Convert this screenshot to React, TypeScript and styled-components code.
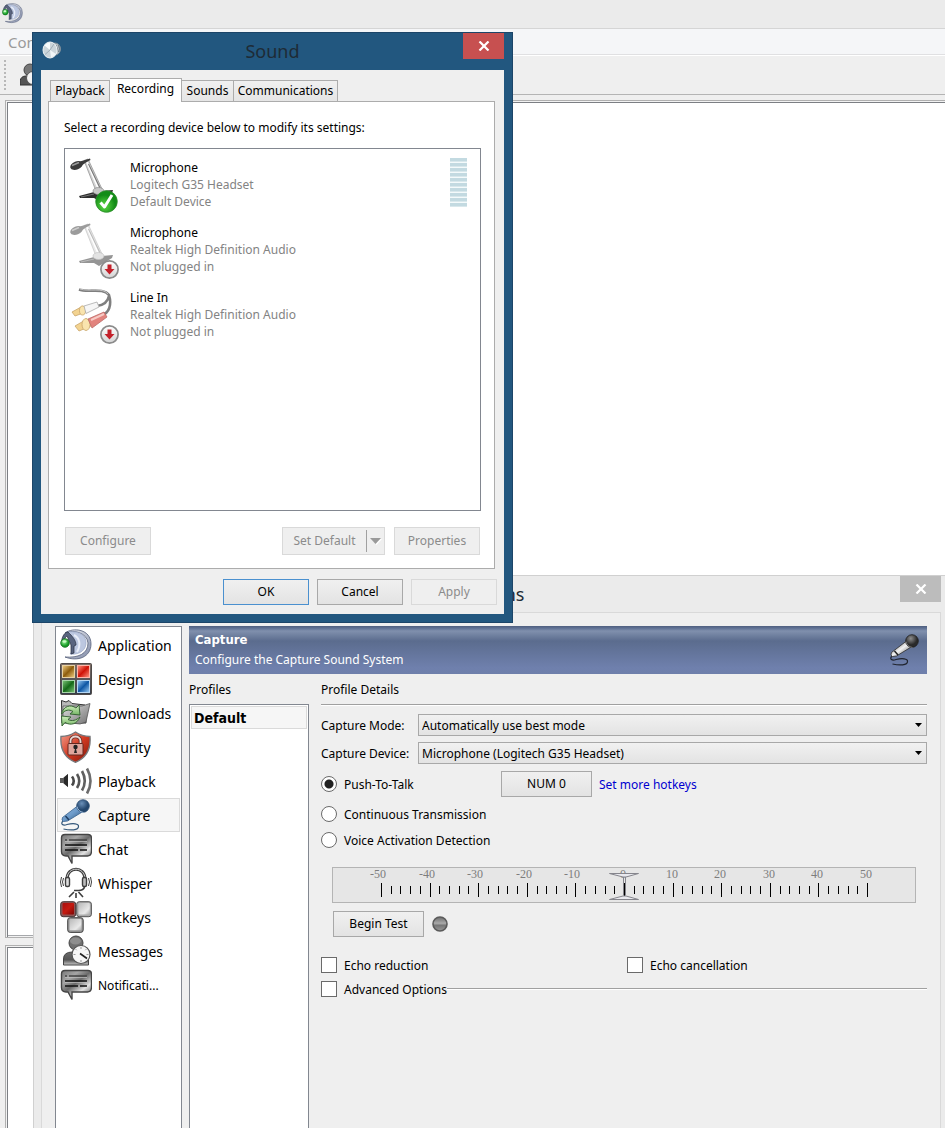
import React, { useState } from "react";
import styled, { createGlobalStyle, css } from "styled-components";

const uiFont = `"Noto Sans", "Open Sans", sans-serif`;
const boldFont = `"DejaVu Sans Condensed", "DejaVu Sans", sans-serif`;

const GlobalStyle = createGlobalStyle`
  *, *::before, *::after { box-sizing: border-box; }
  body { margin: 0; background: #efefef; font-family: ${uiFont}; font-size: 12px; color: #000; }
  button, select, input { font: inherit; color: inherit; margin: 0; }
`;

const Desktop = styled.div`
  position: relative;
  height: 100vh;
  overflow: hidden;
  display: flex;
`;

/* ---------- main client window ---------- */

const MainWindow = styled.main`
  flex: 1;
  display: flex;
  flex-direction: column;
  background: #efefef;
`;

const MainTitleBar = styled.div`
  height: 29px;
  padding: 3px 2px;
  background: #ebebeb;
  border-bottom: 1px solid #d5d5d5;
`;

const MenuBar = styled.nav`
  height: 26px;
  padding: 0 8px;
  display: flex;
  align-items: center;
  background: #f5f6f8;
  border-bottom: 1px solid #e0e0e2;
`;

const MenuItem = styled.button`
  border: 0;
  padding: 0;
  background: none;
  font-size: 15px;
  line-height: 20px;
  color: #9a9a9a;
`;

const ToolBar = styled.div`
  height: 40px;
  display: flex;
  align-items: center;
  gap: 14px;
  padding-left: 4px;
  border-top: 1px solid #fff;
  border-bottom: 1px solid #b4b4b4;
`;

const Grip = styled.div`
  width: 2px;
  height: 31px;
  background: repeating-linear-gradient(#b8b8b8 0 2px, transparent 2px 4px);
`;

const Panes = styled.div`
  flex: 1;
  display: flex;
  flex-direction: column;
  gap: 7px;
  padding: 5px 0 0 5px;
`;

const Pane = styled.div<{ $grow?: boolean }>`
  ${(p) => (p.$grow ? "flex: 1;" : "height: 183px;")}
  background: #fff;
  border: 1px solid #b0b0b0;
  border-right: 0;
  box-shadow: inset 1px 1px 0 #f2f2f2, inset 2px 2px 0 #7c7f84
    ${(p) => p.$grow && ", inset 0 -1px 0 #f2f2f2, inset 0 -2px 0 #a6a8ab"};
  ${(p) => !p.$grow && "border-bottom: 0;"}
`;

/* ---------- shared controls ---------- */

const CloseButton = styled.button<{ $active?: boolean }>`
  width: 41px;
  height: 26px;
  padding: 0;
  border: 0;
  display: grid;
  place-items: center;
  background: ${(p) => (p.$active ? "#c75050" : "#bcbcbc")};
`;

const PushButton = styled.button<{ $primary?: boolean; $tall?: boolean; $wide?: boolean }>`
  width: ${(p) => (p.$wide ? 91 : 86)}px;
  height: ${(p) => (p.$tall ? 28 : 26)}px;
  padding: 0;
  line-height: 16px;
  border: 1px solid ${(p) => (p.$primary ? "#4a90cf" : "#a8a8a8")};
  background: linear-gradient(#f0f0f0, #e3e3e3);
  &:disabled {
    border-color: #d9d9d9;
    background: #efefef;
    color: #8b8b8b;
  }
`;

/* ---------- Sound dialog ---------- */

const SoundDialog = styled.section`
  position: absolute;
  left: 32px;
  top: 32px;
  width: 481px;
  padding: 0 8px 8px;
  border: 1px solid #1c4568;
  background: #22577f;
  z-index: 2;
`;

const SoundTitleBar = styled.header`
  display: grid;
  grid-template-columns: 41px 1fr 41px;
  height: 37px;
`;

const SoundIconBox = styled.div`
  padding: 7px 1px;
`;

const DialogTitle = styled.h1`
  margin: 0;
  text-align: center;
  font-size: 18px;
  font-weight: 400;
  line-height: 37px;
  color: #1e2b36;
`;

const SoundBody = styled.div`
  background: #efefef;
  padding: 8px 7px 9px;
`;

const TabList = styled.div`
  display: flex;
  align-items: flex-end;
  padding-left: 2px;
`;

const Tab = styled.button<{ $selected?: boolean; $width: number }>`
  width: ${(p) => p.$width}px;
  height: 21px;
  padding: 0;
  border: 1px solid #acacac;
  border-bottom: 0;
  border-left-width: 0;
  background: linear-gradient(#f0f0f0, #e5e5e5);
  line-height: 16px;
  &:first-child { border-left-width: 1px; }
  ${(p) =>
    p.$selected &&
    css`
      height: 24px;
      margin-bottom: -1px;
      padding-bottom: 3px;
      position: relative;
      background: #fff;
    `}
`;

const TabPanel = styled.div`
  border: 1px solid #acacac;
  background: #fff;
  padding: 17px 13px 13px 15px;
  margin-right: 2px;
`;

const Prompt = styled.p`
  margin: 0 0 12px;
  line-height: 17px;
`;

const DeviceList = styled.ul`
  list-style: none;
  margin: 0;
  padding: 9px 13px 0 5px;
  height: 363px;
  border: 1px solid #828790;
`;

const Device = styled.li`
  display: grid;
  grid-template-columns: 60px 1fr 17px;
  height: 65px;
`;

const DeviceText = styled.div`
  padding-top: 1px;
  line-height: 17px;
  color: #838383;
`;

const DeviceName = styled.div`
  color: #000;
`;

const LevelMeter = styled.div`
  height: 49px;
  background: repeating-linear-gradient(#c3dae1 0 3px, #d9e8ec 3px 4px, #f4fafb 4px 5px);
`;

const PanelActions = styled.div`
  display: flex;
  gap: 9px;
  padding: 16px 1px 0;
`;

const Spacer = styled.div`
  flex: 1;
`;

const SplitButton = styled.div`
  display: flex;
  align-items: center;
  width: 103px;
  height: 28px;
  border: 1px solid #d9d9d9;
  background: #efefef;
`;

const SplitMain = styled.button`
  flex: 1;
  padding: 0;
  border: 0;
  background: none;
  line-height: 16px;
  &:disabled { color: #8b8b8b; }
`;

const SplitArrow = styled.button`
  width: 18px;
  height: 22px;
  padding: 0;
  border: 0;
  border-left: 1px solid #a0a0a0;
  background: none;
  display: grid;
  place-items: center;
`;

const DialogActions = styled.div`
  display: flex;
  justify-content: flex-end;
  gap: 8px;
  padding-top: 10px;
`;

/* ---------- Options window ---------- */

const OptionsWindow = styled.section`
  position: absolute;
  left: 33px;
  right: 0;
  top: 575px;
  bottom: 0;
  display: flex;
  flex-direction: column;
  padding: 0 4px 0 7px;
  background: #ebebeb;
  border: 1px solid #d0d0d0;
  border-width: 1px 0 0 1px;
`;

const OptionsTitleBar = styled.header`
  display: grid;
  grid-template-columns: 41px 1fr 41px;
  height: 36px;
`;

const OptionsBody = styled.div`
  flex: 1;
  display: flex;
  align-items: stretch;
  gap: 7px;
  padding: 13px 13px 0;
  background: #efefef;
  border: 1px solid #d9d9d9;
  border-bottom: 0;
`;

const Sidebar = styled.ul`
  list-style: none;
  margin: 0;
  width: 127px;
  padding: 1px;
  background: #fff;
  border: 1px solid #828790;
  border-bottom: 0;
`;

const SidebarItem = styled.button<{ $selected?: boolean; $small?: boolean }>`
  width: 100%;
  height: 34px;
  display: flex;
  align-items: center;
  gap: 6px;
  padding: 0 0 0 2px;
  border: 1px solid ${(p) => (p.$selected ? "#dadada" : "transparent")};
  background: ${(p) => (p.$selected ? "#f6f6f6" : "none")};
  font-size: ${(p) => (p.$small ? 12 : 14)}px;
  line-height: 20px;
  white-space: nowrap;
`;

const SidebarText = styled.span`
  padding-top: 2px;
`;

const Content = styled.div`
  flex: 1;
  display: flex;
  flex-direction: column;
`;

const Banner = styled.header`
  height: 48px;
  display: flex;
  justify-content: space-between;
  align-items: center;
  padding: 0 6px;
  color: #fff;
  line-height: 20px;
  background: linear-gradient(#4f5f7f 0, #5d6f92 2px, #8090ad 5px, #5b6c8e 15px, #6f80ad 42px, #6e7fab);
`;

const BannerTitle = styled.h2`
  margin: 0;
  font: 700 13px/20px ${boldFont};
`;

const Columns = styled.div`
  flex: 1;
  display: flex;
  gap: 12px;
  padding-top: 6px;
`;

const Profiles = styled.div`
  width: 120px;
  display: flex;
  flex-direction: column;
`;

const Heading = styled.h3`
  margin: 0;
  height: 24px;
  font-size: 12px;
  font-weight: 400;
  line-height: 20px;
`;

const ProfileList = styled.ul`
  flex: 1;
  list-style: none;
  margin: 0;
  padding: 1px;
  background: #fff;
  border: 1px solid #828790;
  border-bottom: 0;
`;

const Profile = styled.li`
  height: 23px;
  padding: 0 2px;
  border: 1px solid #dadada;
  background: #f6f6f6;
  font: 700 14px/22px ${boldFont};
`;

const Details = styled.div`
  flex: 1;
`;

const Rule = styled.hr`
  flex: 1;
  height: 2px;
  margin: 0;
  border: 0;
  border-top: 1px solid #a0a0a0;
  background: #fff;
`;

const FieldRow = styled.div`
  display: grid;
  grid-template-columns: 97px 1fr;
  align-items: center;
  margin-bottom: 6px;
  height: 22px;
`;

const Fields = styled.div`
  padding-top: 8px;
`;

const SelectBox = styled.div`
  position: relative;
  display: flex;
`;

const Select = styled.select`
  width: 100%;
  height: 22px;
  appearance: none;
  padding: 0 20px 0 3px;
  border: 1px solid #a8a8a8;
  border-radius: 0;
  background: linear-gradient(#f1f1f1, #e3e3e3);
`;

const SelectArrow = styled.svg`
  position: absolute;
  right: 5px;
  top: 9px;
  pointer-events: none;
`;

const OptionRow = styled.div<{ $height: number }>`
  display: flex;
  align-items: center;
  height: ${(p) => p.$height}px;
`;

const OptionLabel = styled.label<{ $width?: number }>`
  display: flex;
  align-items: center;
  gap: 7px;
  ${(p) => p.$width && `width: ${p.$width}px;`}
`;

const Radio = styled.input`
  appearance: none;
  width: 16px;
  height: 16px;
  border: 1px solid #6a6a6a;
  border-radius: 50%;
  background: #fff;
  &:checked { background: radial-gradient(circle, #222 0 4px, #fff 5px); }
`;

const Checkbox = styled.input`
  appearance: none;
  width: 16px;
  height: 16px;
  border: 1px solid #6a6a6a;
  background: #fff;
  &:checked { background: #444; box-shadow: inset 0 0 0 3px #fff; }
`;

const HotkeyLink = styled.a`
  margin-left: 7px;
  color: #0000d0;
  text-decoration: none;
`;

const ScaleBox = styled.div`
  position: relative;
  display: flex;
  justify-content: center;
  height: 36px;
  margin: 17px 11px 8px;
  border: 1px solid #b4b4b4;
  background: #e6e6e6;
`;

const ScaleInput = styled.input`
  position: absolute;
  inset: 0;
  width: 100%;
  height: 100%;
  opacity: 0;
`;

const TestRow = styled.div`
  display: flex;
  align-items: center;
  gap: 8px;
  padding-left: 12px;
`;

const EchoRow = styled.div`
  display: grid;
  grid-template-columns: 1fr 300px;
  margin-top: 16px;
  height: 24px;
  align-items: center;
`;

/* ---------- icons ---------- */

const TeamIcon = ({ size = 32 }: { size?: number }) => (
  <svg width={size} height={size} viewBox="0 0 32 32">
    <defs>
      <linearGradient id="tsRing" x2="1" y2="1">
        <stop stopColor="#f4f5f8" />
        <stop offset="1" stopColor="#7d88a5" />
      </linearGradient>
      <radialGradient id="tsDot" cx=".4" cy=".35">
        <stop stopColor="#9cf59a" />
        <stop offset="1" stopColor="#159a25" />
      </radialGradient>
    </defs>
    <path d="M5 4C13-2 31 0 31 15 31 28 18 33 5 28 18 29 28 25 28 14 27 4 14 0 5 4Z" fill="url(#tsRing)" stroke="#56607a" strokeWidth=".8" />
    <path d="M8 3C20 1 27 8 26 15 25 23 17 26 10 25 17 18 15 10 8 3Z" fill="#bcc7e0" stroke="#9aa6c6" strokeWidth=".7" />
    <path d="M14 6c6 3 7 10 3 17" fill="none" stroke="#e8edf8" strokeWidth="2" />
    <path d="M1.500 13C2 7 5 3 8 3c4 4 8 8 8 13l-2 1v7l-3 1V16L7 7C5 8 4 11 4 14Z" fill="#59647f" stroke="#252d3e" strokeWidth=".7" />
    <circle cx="5" cy="14" r="4.300" fill="url(#tsDot)" stroke="#146b20" strokeWidth=".8" />
    <ellipse cx="4.500" cy="12.500" rx="2" ry="1.300" fill="#d8ffd5" opacity=".8" />
  </svg>
);

const DesignIcon = () => (
  <svg width="32" height="32" viewBox="0 0 32 32">
    <defs>
      {[["dA", "#f2cf83", "#8e5d0d"], ["dB", "#ff9a84", "#d01206"], ["dC", "#7fc77a", "#156a18"], ["dD", "#9ccdf5", "#0e57a5"]].map(([id, a, b]) => (
        <linearGradient id={id} key={id} x2="1" y2="1">
          <stop stopColor={a} />
          <stop offset=".5" stopColor={b} />
          <stop offset="1" stopColor={a} />
        </linearGradient>
      ))}
      <linearGradient id="dFrame" x2="0" y2="1">
        <stop stopColor="#7e6e66" />
        <stop offset="1" stopColor="#363d49" />
      </linearGradient>
    </defs>
    <rect x=".5" y=".5" width="31" height="31" rx="1" fill="url(#dFrame)" stroke="#4f4a48" />
    <rect x="2.500" y="2.500" width="12" height="12" fill="url(#dA)" stroke="#e7d1a4" />
    <rect x="17.500" y="2.500" width="12" height="12" fill="url(#dB)" stroke="#ffb5a8" />
    <rect x="2.500" y="17.500" width="12" height="12" fill="url(#dC)" stroke="#a9d5a9" />
    <rect x="17.500" y="17.500" width="12" height="12" fill="url(#dD)" stroke="#b5d6f2" />
  </svg>
);

const DownloadsIcon = () => (
  <svg width="32" height="32" viewBox="0 0 32 32">
    <defs>
      <linearGradient id="folder" x2="1" y2="1">
        <stop stopColor="#e2e2e2" />
        <stop offset="1" stopColor="#727272" />
      </linearGradient>
      <linearGradient id="leaf" x2="0" y2="1">
        <stop stopColor="#d3f0c0" />
        <stop offset="1" stopColor="#72b563" />
      </linearGradient>
    </defs>
    <path d="M1.500 5V3.500L6 5l3-1.500 3 3 13 1.500 1 18L2 26Z" fill="#b9b9b9" stroke="#333" />
    <path d="M3 9 22 9l8-2.500L26 25l-6 2L3 25Z" fill="url(#folder)" stroke="#555" strokeWidth=".8" />
    <path d="M1.500 17C3 9 11 7 16 11l3-3 1 10-10-1 3-2.500C9 12 5 13 1.500 17Z" fill="url(#leaf)" stroke="#2f5c2c" strokeWidth=".9" />
    <path d="M20 20c-3 7-9 9-15 5.500L2 29l-.500-10 9.500 1-3 2.500c4 2 8 1 12-2.500Z" fill="url(#leaf)" stroke="#2f5c2c" strokeWidth=".9" />
  </svg>
);

const SecurityIcon = () => (
  <svg width="32" height="32" viewBox="0 0 32 32">
    <defs>
      <linearGradient id="shield" x2="1" y2="1">
        <stop stopColor="#f2a08e" />
        <stop offset=".5" stopColor="#d33a22" />
        <stop offset="1" stopColor="#7f1508" />
      </linearGradient>
    </defs>
    <path d="M15.500 1C11 4 6 5.500 1 5.500 0 18 5 27 15.500 31.300 26 27 31 18 30 5.500 25 5.500 20 4 15.500 1Z" fill="url(#shield)" stroke="#77787b" strokeWidth="1.400" />
    <path d="M10.500 13V10c0-6 10-6 10 0v3" fill="none" stroke="#6b3029" strokeWidth="3.600" />
    <path d="M10.500 13V10c0-6 10-6 10 0v3" fill="none" stroke="#ead7d4" strokeWidth="1.800" />
    <rect x="8" y="12.500" width="15" height="11.500" rx="1" fill="#dfa59c" stroke="#642820" />
    <circle cx="15.500" cy="16" r="2.200" fill="#222" />
    <path d="M15.500 16 14 22h3Z" fill="#222" />
  </svg>
);

const PlaybackIcon = () => (
  <svg width="32" height="32" viewBox="0 0 32 32" fill="none">
    <path d="M0 13h3l5-4v13l-5-4H0Z" fill="#5c5c5c" />
    <path d="M4 12.500 8 9v13l-4-3.500Z" fill="#2b2b2b" />
    <path d="M12 11.500q3.500 4.500 0 9" stroke="#484848" strokeWidth="2.600" />
    <path d="M17 9q4.500 7 0 14" stroke="#565656" strokeWidth="2.600" />
    <path d="M22 6q5.500 10 0 19.500" stroke="#606060" strokeWidth="2.600" />
    <path d="M27 3.500q7 12.500 0 25" stroke="#6c6c6c" strokeWidth="2.600" />
  </svg>
);

const MicIcon = ({ blue }: { blue?: boolean }) => {
  const id = blue ? "micBlue" : "micGray";
  return (
    <svg width="32" height="32" viewBox="0 0 32 32">
      <defs>
        <linearGradient id={id} x1="0" y1="0" x2="1" y2="1">
          <stop stopColor={blue ? "#8fb5dc" : "#4a4a4a"} />
          <stop offset=".5" stopColor={blue ? "#6d9bca" : "#f3f3f3"} />
          <stop offset="1" stopColor={blue ? "#284c74" : "#3a3a3a"} />
        </linearGradient>
        <radialGradient id={`${id}Head`} cx=".4" cy=".3">
          <stop stopColor={blue ? "#6a90b9" : "#8d8d8d"} />
          <stop offset="1" stopColor={blue ? "#23466d" : "#2a2a2a"} />
        </radialGradient>
      </defs>
      <path d="M3 22C0 25 3 27 7 25.500c6-1.500 12-1 11.500 2 0 4-8 4-15 2.500" fill="none" stroke={blue ? "#35587b" : "#20242e"} strokeWidth="1.200" />
      <path d="M17.500 7 2.500 18.500q-1.500 3 1 4L7.500 22 23 12.500Z" fill={`url(#${id})`} stroke={blue ? "#365f8c" : "#2b2b2b"} strokeWidth=".8" />
      <path d="M5.500 17 9 21" stroke={blue ? "#1f3f63" : "#222"} strokeWidth="1.500" />
      <circle cx="23" cy="7" r="6.300" fill={`url(#${id}Head)`} stroke={blue ? "#284a6f" : "#1d1d1d"} strokeWidth=".8" />
      <path d="M17 7.500Q18 12.500 23.500 13.500" fill="none" stroke={blue ? "#9dbbdc" : "#777"} strokeWidth="1" />
    </svg>
  );
};

const ChatIcon = () => (
  <svg width="32" height="32" viewBox="0 0 32 32">
    <defs>
      <linearGradient id="bubble" x2=".8" y2="1">
        <stop stopColor="#777" />
        <stop offset=".3" stopColor="#a5a5a5" />
        <stop offset=".5" stopColor="#6a6a6a" />
        <stop offset=".75" stopColor="#e2e2e2" />
        <stop offset="1" stopColor="#5b5b5b" />
      </linearGradient>
    </defs>
    <path d="M5 1.500H28q3.500 0 3.500 4V18q0 5-4 5H12v7.500L8 23H6q-4.500 0-4.500-4.500V5q0-3.500 3.500-3.500Z" fill="url(#bubble)" stroke="#444" strokeWidth="1.400" />
    <path d="M5 7h2M9 7h18" stroke="#444" strokeWidth="1.300" />
    <path d="M5 12h22M5 17h13M20 17h7" stroke="#111" strokeWidth="1.600" />
    <path d="M5 8.500h22M5 13.500h22" stroke="#c2c2c2" strokeWidth=".7" />
  </svg>
);

const WhisperIcon = () => (
  <svg width="32" height="32" viewBox="0 0 32 32" fill="none" stroke="#3e3e3e">
    <path d="M7 12C7-1 25-1 25 12" strokeWidth="3" />
    <path d="M7 12C7-1 25-1 25 12" stroke="#ddd" strokeWidth=".9" />
    <rect x="5.500" y="10.500" width="4" height="9" rx="1.500" fill="#ddd" strokeWidth="1.400" />
    <rect x="22.500" y="10.500" width="4" height="9" rx="1.500" fill="#bbb" strokeWidth="1.400" />
    <path d="M3.500 11Q1.500 15 3.500 19M1.500 10Q-.500 15 1.500 20M28.500 11Q30.500 15 28.500 19M30.500 10Q32.500 15 30.500 20" strokeWidth="1" />
    <path d="M24.500 20q-1 3.500-6 3.500H14" strokeWidth="1.700" />
    <path d="M14 25 9 30M16 26v5M18.500 25l4.500 5" strokeWidth="1.600" />
  </svg>
);

const HotkeysIcon = () => (
  <svg width="32" height="32" viewBox="0 0 32 32">
    <defs>
      <linearGradient id="keyRed" x2="1" y2="1">
        <stop stopColor="#a90d0d" />
        <stop offset=".5" stopColor="#c51a10" />
        <stop offset="1" stopColor="#7f0503" />
      </linearGradient>
      <linearGradient id="keyGray" x2="1" y2="1">
        <stop stopColor="#b9b9b9" />
        <stop offset=".7" stopColor="#e9e9e9" />
        <stop offset="1" stopColor="#aaa" />
      </linearGradient>
    </defs>
    <rect x=".7" y=".7" width="15" height="15" rx="2.500" fill="#8f5555" stroke="#433" />
    <rect x="2.500" y="2" width="11.500" height="11.500" rx="1" fill="url(#keyRed)" />
    <rect x="16.700" y=".7" width="14.700" height="15" rx="2.500" fill="#aaa" stroke="#555" />
    <rect x="18.500" y="2" width="11.300" height="11.500" rx="1" fill="url(#keyGray)" />
    <rect x="7.700" y="16.700" width="15.500" height="14.700" rx="2.500" fill="#999" stroke="#444" />
    <rect x="9.500" y="18" width="12" height="11.300" rx="1" fill="url(#keyGray)" />
  </svg>
);

const MessagesIcon = () => (
  <svg width="32" height="32" viewBox="0 0 32 32">
    <defs>
      <linearGradient id="person" x2="0" y2="1">
        <stop stopColor="#6b6b6b" />
        <stop offset=".6" stopColor="#555" />
        <stop offset="1" stopColor="#c9c9c9" />
      </linearGradient>
    </defs>
    <path d="M3.500 30V24q0-7 9-7h6q10 0 10 7v6Z" fill="url(#person)" stroke="#444" />
    <circle cx="16" cy="8" r="7" fill="#707070" stroke="#444" />
    <ellipse cx="15.500" cy="6" rx="5.500" ry="3.500" fill="#8e8e8e" />
    <circle cx="21" cy="19.500" r="9" fill="#f6f6f6" stroke="#555" strokeWidth="1.200" />
    <path d="M21 12v2M21 25v2M13.500 19.500h2M26.500 19.500h2M15.700 14.200l1 1M26.300 14.200l-1 1" stroke="#999" />
    <path d="M20 18.500 27 23.500" stroke="#222" strokeWidth="1.600" />
  </svg>
);

const SpeakerIcon = () => (
  <svg width="20" height="20" viewBox="0 0 20 20">
    <ellipse cx="13" cy="9" rx="5.500" ry="6" fill="#b9c1c6" stroke="#7e8e99" />
    <path d="M14 5q3 4 0 8M16.500 5q2 4 0 7" fill="none" stroke="#667682" />
    <ellipse cx="8" cy="10" rx="7" ry="8" fill="#ccd5da" stroke="#eff3f5" />
    <path d="M8 10 2.500 5.500A7 8 0 0 1 8 2.500Z" fill="#f8fbfc" />
    <path d="M8 10l6 4q-2 3-5 3.500Z" fill="#f1f5f7" />
    <path d="M8 10 3 14.500M8 10l4-6" stroke="#9fadb7" />
  </svg>
);

const StandMic = ({ faded }: { faded?: boolean }) => (
  <g opacity={faded ? 0.5 : 1}>
    <path d="M9 38 26 33.500 43 32 42 35 29 43 24 40 10 40Z" fill="#2e2e2e" />
    <path d="M11 39 24 36" stroke="#777" />
    <path d="M14 2.500 18 1 32 31 26 33Z" fill="#d5d5d5" stroke="#8a8a8a" strokeWidth=".7" />
    <path d="M16.500 3 28.500 31" stroke="#fff" strokeWidth="1.800" />
    <path d="M18.500 6 30.500 31" stroke="#777" strokeWidth="1.100" />
    <ellipse cx="28.500" cy="33" rx="5.500" ry="3.500" fill="#c8c8c8" stroke="#888" strokeWidth=".7" />
    <path d="M8 4 15 2 20 .500 20.500 2 16 4.500 11 8Z" fill="#3b3b3b" />
    <ellipse cx="6.500" cy="7.500" rx="6.500" ry="4" transform="rotate(-22 6.500 7.500)" fill="#3a3a3a" />
    <path d="M2 7.500 9 4.500" stroke="#9a9a9a" strokeWidth="1.600" />
  </g>
);

const CableArt = () => (
  <g opacity=".75">
    <path d="M9 1.500C18 5 33-1 39 7 42 17 39 25 32 27M39 8C38 13 34 17 27 18" fill="none" stroke="#555" strokeWidth="2.600" />
    <path d="M10 1C19 4 33-1 38 6" fill="none" stroke="#c7c7c7" strokeWidth=".8" />
    <path d="M2 24 13 18l3 6L5 28Z" fill="#efc56c" stroke="#b7883a" strokeWidth=".8" />
    <ellipse cx="12.500" cy="22.500" rx="3" ry="4.500" fill="#f7dc93" stroke="#b7883a" strokeWidth=".8" />
    <path d="M14 18 27 14l2 5-13 6.500Z" fill="#f3f3f3" stroke="#8f8f8f" strokeWidth=".8" />
    <path d="M5 38 17 31l4 7L9 43Z" fill="#efc56c" stroke="#b7883a" strokeWidth=".8" />
    <ellipse cx="16" cy="36.500" rx="4" ry="6" fill="#f7dc93" stroke="#b7883a" strokeWidth=".8" />
    <path d="M18 31 34 24l3 5-15 11Z" fill="#d95a52" stroke="#a83a36" strokeWidth=".8" />
    <path d="M21 32 34 26" stroke="#f5b9b2" strokeWidth="2" />
  </g>
);

const DeviceIcon = ({ kind, ready }: { kind: "mic" | "line"; ready?: boolean }) => (
  <svg width="52" height="58" viewBox="0 0 52 58">
    <defs>
      <radialGradient id="okFill" cx=".4" cy=".7">
        <stop stopColor="#5fdc45" />
        <stop offset="1" stopColor="#138c17" />
      </radialGradient>
      <linearGradient id="offFill" x2="0" y2="1">
        <stop stopColor="#fff" />
        <stop offset="1" stopColor="#d3d3d3" />
      </linearGradient>
    </defs>
    {kind === "mic" ? <StandMic faded={!ready} /> : <CableArt />}
    {ready ? (
      <>
        <circle cx="36.500" cy="43.500" r="10.800" fill="url(#okFill)" stroke="#2f8f2d" strokeWidth=".8" />
        <path d="M30.500 44.500 34.500 49 42 37" fill="none" stroke="#fff" strokeWidth="3" strokeLinejoin="round" />
      </>
    ) : (
      <>
        <circle cx="39.500" cy="46.500" r="8.600" fill="url(#offFill)" stroke="#8b8b8b" strokeWidth="1.700" />
        <path d="M37.500 41.500h4v4.500h3L39.500 51.500l-5-5.500h3Z" fill="#c3202a" />
      </>
    )}
  </svg>
);

const CloseGlyph = () => (
  <svg width="12" height="10" viewBox="0 0 12 10">
    <path d="M1.500 .5 10.500 9.500M10.500 .5 1.500 9.500" stroke="#fff" strokeWidth="2.200" />
  </svg>
);

const LedIcon = () => (
  <svg width="16" height="16" viewBox="0 0 16 16">
    <defs>
      <linearGradient id="led" x2="0" y2="1">
        <stop stopColor="#6c6c6c" />
        <stop offset=".45" stopColor="#aaa" />
        <stop offset=".6" stopColor="#777" />
        <stop offset="1" stopColor="#999" />
      </linearGradient>
    </defs>
    <circle cx="8" cy="8" r="7" fill="url(#led)" stroke="#5a5a5a" strokeWidth="1.600" />
  </svg>
);

/* ---------- voice activation scale ---------- */

const ticks = Array.from({ length: 51 }, (_, i) => -50 + i * 2);
const tickX = (value: number) => Math.round(291 + value * 4.86);

const ActivationScale = () => {
  const [level, setLevel] = useState(0);
  return (
    <ScaleBox>
      <svg width="582" height="34" viewBox="0 0 582 34" shapeRendering="crispEdges">
        {ticks.map((t) => {
          const major = t % 10 === 0;
          return <rect key={t} x={tickX(t)} y={major ? 15 : 18} width="1" height={major ? 14 : 8} fill="#000" />;
        })}
        {ticks
          .filter((t) => t % 10 === 0)
          .map((t) => (
            <text key={t} x={tickX(t) - (t < 0 ? 3 : 1)} y="10" textAnchor="middle" fontFamily="Liberation Serif, serif" fontSize="12" fill="#7d7d7d">
              {t}
            </text>
          ))}
        <g transform={`translate(${tickX(level)} 0)`} fill="#e9e9ee" stroke="#85858c" shapeRendering="auto">
          <path d="M-.5 9v18.500M1.500 9v18.500" />
          <path d="M-14.500 5.500h29L2 9H-1ZM-14.500 31.500h29L2 28H-1Z" />
        </g>
      </svg>
      <ScaleInput type="range" min={-50} max={50} value={level} onChange={(e) => setLevel(Number(e.target.value))} aria-label="Voice activation level" />
    </ScaleBox>
  );
};

/* ---------- page ---------- */

const sections = [
  { name: "Application", icon: <TeamIcon /> },
  { name: "Design", icon: <DesignIcon /> },
  { name: "Downloads", icon: <DownloadsIcon /> },
  { name: "Security", icon: <SecurityIcon /> },
  { name: "Playback", icon: <PlaybackIcon /> },
  { name: "Capture", icon: <MicIcon blue /> },
  { name: "Chat", icon: <ChatIcon /> },
  { name: "Whisper", icon: <WhisperIcon /> },
  { name: "Hotkeys", icon: <HotkeysIcon /> },
  { name: "Messages", icon: <MessagesIcon /> },
  { name: "Notificati...", icon: <ChatIcon />, small: true },
];

const devices = [
  { name: "Microphone", driver: "Logitech G35 Headset", status: "Default Device", kind: "mic" as const, ready: true },
  { name: "Microphone", driver: "Realtek High Definition Audio", status: "Not plugged in", kind: "mic" as const, ready: false },
  { name: "Line In", driver: "Realtek High Definition Audio", status: "Not plugged in", kind: "line" as const, ready: false },
];

const Dropdown = ({ id, label, value }: { id: string; label: string; value: string }) => (
  <FieldRow>
    <label htmlFor={id}>{label}</label>
    <SelectBox>
      <Select id={id} defaultValue={value}>
        <option>{value}</option>
      </Select>
      <SelectArrow width="7" height="4" viewBox="0 0 7 4">
        <path d="M0 0h7L3.500 4Z" />
      </SelectArrow>
    </SelectBox>
  </FieldRow>
);

export default function App() {
  const [section, setSection] = useState("Capture");
  const [mode, setMode] = useState("ptt");

  return (
    <Desktop>
      <GlobalStyle />

      <MainWindow>
        <MainTitleBar>
          <TeamIcon size={21} />
        </MainTitleBar>
        <MenuBar>
          <MenuItem>Connections</MenuItem>
        </MenuBar>
        <ToolBar>
          <Grip />
          <svg width="24" height="24" viewBox="0 0 24 24">
            <path d="M0 22v-4q1-5 6-5h8v9Z" fill="#555" stroke="#333" />
            <circle cx="10" cy="7" r="6" fill="#777" stroke="#444" />
            <circle cx="13" cy="15" r="6.500" fill="#f4f4f4" stroke="#555" />
          </svg>
        </ToolBar>
        <Panes>
          <Pane $grow />
          <Pane />
        </Panes>
      </MainWindow>

      <OptionsWindow>
        <OptionsTitleBar>
          <span />
          <DialogTitle>Options</DialogTitle>
          <CloseButton aria-label="Close options">
            <CloseGlyph />
          </CloseButton>
        </OptionsTitleBar>
        <OptionsBody>
          <Sidebar>
            {sections.map((s) => (
              <li key={s.name}>
                <SidebarItem $selected={s.name === section} $small={s.small} onClick={() => setSection(s.name)}>
                  {s.icon}
                  <SidebarText>{s.name}</SidebarText>
                </SidebarItem>
              </li>
            ))}
          </Sidebar>
          <Content>
            <Banner>
              <div>
                <BannerTitle>Capture</BannerTitle>
                Configure the Capture Sound System
              </div>
              <MicIcon />
            </Banner>
            <Columns>
              <Profiles>
                <Heading>Profiles</Heading>
                <ProfileList>
                  <Profile>Default</Profile>
                </ProfileList>
              </Profiles>
              <Details>
                <Heading>Profile Details</Heading>
                <Rule />
                <Fields>
                  <Dropdown id="capture-mode" label="Capture Mode:" value="Automatically use best mode" />
                  <Dropdown id="capture-device" label="Capture Device:" value="Microphone (Logitech G35 Headset)" />
                </Fields>
                <OptionRow $height={28}>
                  <OptionLabel $width={180}>
                    <Radio type="radio" name="mode" checked={mode === "ptt"} onChange={() => setMode("ptt")} />
                    Push-To-Talk
                  </OptionLabel>
                  <PushButton $wide>NUM 0</PushButton>
                  <HotkeyLink href="#hotkeys">Set more hotkeys</HotkeyLink>
                </OptionRow>
                <OptionRow $height={32}>
                  <OptionLabel>
                    <Radio type="radio" name="mode" checked={mode === "ct"} onChange={() => setMode("ct")} />
                    Continuous Transmission
                  </OptionLabel>
                </OptionRow>
                <OptionRow $height={20}>
                  <OptionLabel>
                    <Radio type="radio" name="mode" checked={mode === "vad"} onChange={() => setMode("vad")} />
                    Voice Activation Detection
                  </OptionLabel>
                </OptionRow>
                <ActivationScale />
                <TestRow>
                  <PushButton $wide>Begin Test</PushButton>
                  <LedIcon />
                </TestRow>
                <EchoRow>
                  <OptionLabel>
                    <Checkbox type="checkbox" />
                    Echo reduction
                  </OptionLabel>
                  <OptionLabel>
                    <Checkbox type="checkbox" />
                    Echo cancellation
                  </OptionLabel>
                </EchoRow>
                <OptionRow $height={24}>
                  <OptionLabel>
                    <Checkbox type="checkbox" />
                    Advanced Options
                  </OptionLabel>
                  <Rule />
                </OptionRow>
              </Details>
            </Columns>
          </Content>
        </OptionsBody>
      </OptionsWindow>

      <SoundDialog role="dialog" aria-labelledby="sound-title">
        <SoundTitleBar>
          <SoundIconBox>
            <SpeakerIcon />
          </SoundIconBox>
          <DialogTitle id="sound-title">Sound</DialogTitle>
          <CloseButton $active aria-label="Close">
            <CloseGlyph />
          </CloseButton>
        </SoundTitleBar>
        <SoundBody>
          <TabList role="tablist">
            <Tab role="tab" $width={60}>Playback</Tab>
            <Tab role="tab" $width={72} $selected aria-selected>Recording</Tab>
            <Tab role="tab" $width={52}>Sounds</Tab>
            <Tab role="tab" $width={104}>Communications</Tab>
          </TabList>
          <TabPanel role="tabpanel">
            <Prompt>Select a recording device below to modify its settings:</Prompt>
            <DeviceList>
              {devices.map((d, i) => (
                <Device key={i}>
                  <DeviceIcon kind={d.kind} ready={d.ready} />
                  <DeviceText>
                    <DeviceName>{d.name}</DeviceName>
                    <div>{d.driver}</div>
                    <div>{d.status}</div>
                  </DeviceText>
                  {d.ready && <LevelMeter />}
                </Device>
              ))}
            </DeviceList>
            <PanelActions>
              <PushButton $tall disabled>Configure</PushButton>
              <Spacer />
              <SplitButton>
                <SplitMain disabled>Set Default</SplitMain>
                <SplitArrow disabled aria-label="More default options">
                  <svg width="12" height="7" viewBox="0 0 12 7">
                    <path d="M1 1h11L6.500 7Z" fill="#fff" />
                    <path d="M0 0h11L5.500 6Z" fill="#9a9a9a" />
                  </svg>
                </SplitArrow>
              </SplitButton>
              <PushButton $tall disabled>Properties</PushButton>
            </PanelActions>
          </TabPanel>
          <DialogActions>
            <PushButton $primary>OK</PushButton>
            <PushButton>Cancel</PushButton>
            <PushButton disabled>Apply</PushButton>
          </DialogActions>
        </SoundBody>
      </SoundDialog>
    </Desktop>
  );
}
